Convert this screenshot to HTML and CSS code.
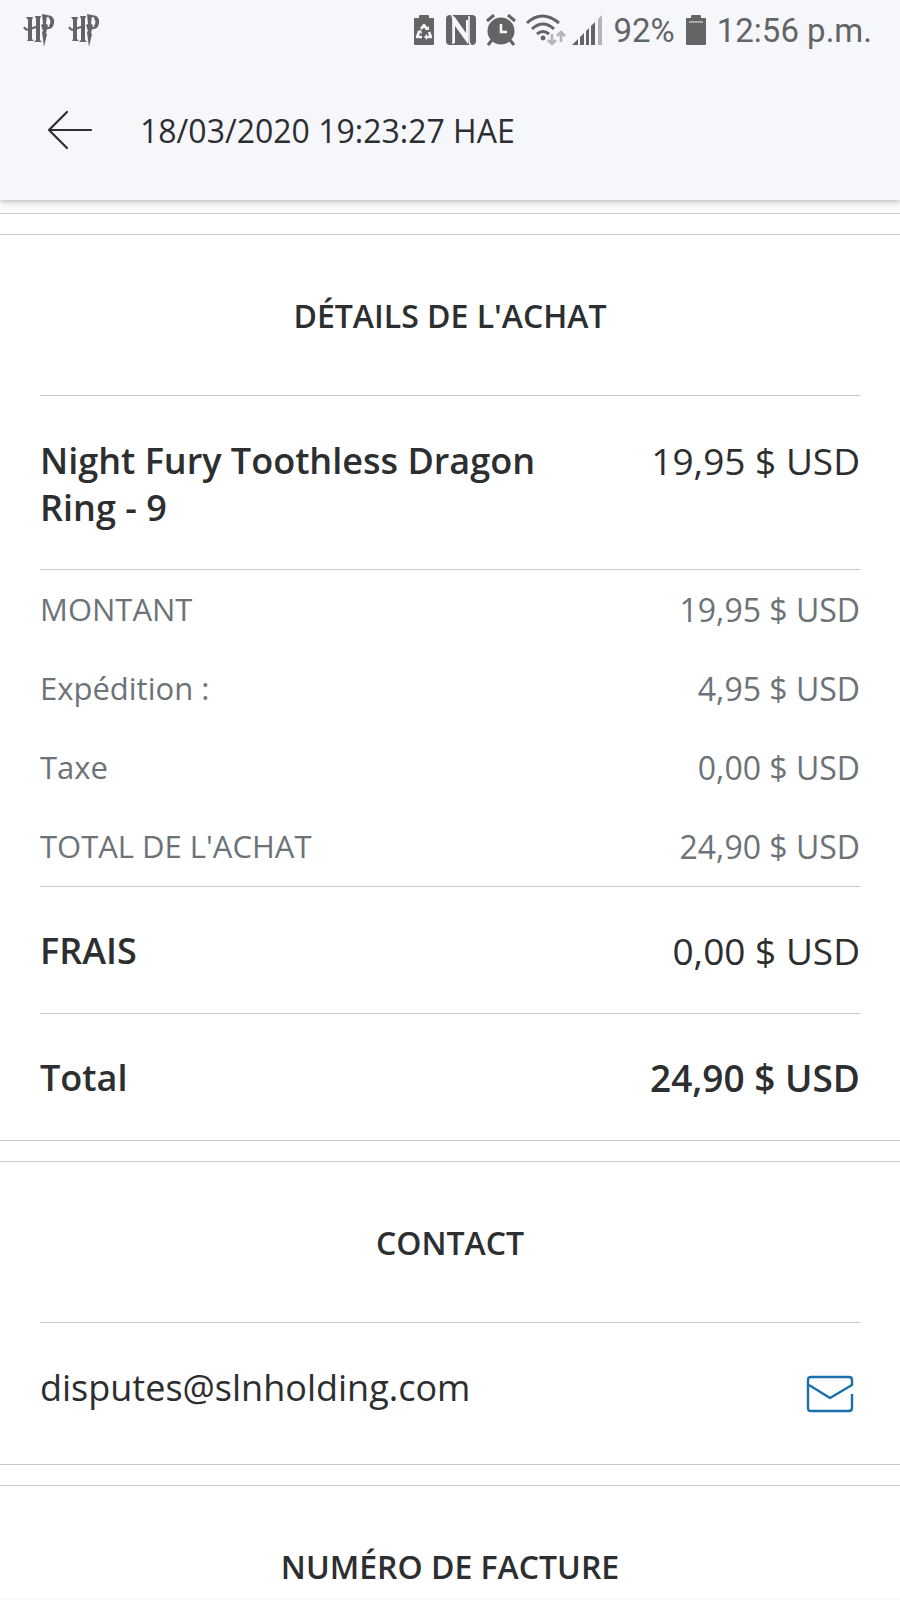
FILE: index.html
```html
<!DOCTYPE html>
<html lang="fr">
<head>
    <meta charset="UTF-8">
    <meta name="viewport" content="width=device-width, initial-scale=1.0">
    <title>Détails de l'achat</title>
    <link rel="stylesheet" href="styles.css">
</head>
<body>
    <header>
        <!-- Barre d'état -->
        <div class="status-bar">
            <svg class="monogram" viewBox="0 0 32 34" aria-hidden="true"><use href="#monogram"/></svg>
            <svg class="monogram" viewBox="0 0 32 34" aria-hidden="true"><use href="#monogram"/></svg>

            <div class="status-right">
                <svg class="icon-battery" viewBox="0 0 22 32" aria-hidden="true">
                    <path d="M2 4h4V2q0-1 1-1h8q1 0 1 1v2h4q1 0 1 1v25q0 1-1 1H2q-1 0-1-1V5q0-1 1-1z" fill="#636466"/>
                    <path d="M8 15l3-4 3 4M16 18l2 5h-5M9 23H4l2-5" fill="none" stroke="#f6f7fb" stroke-width="2.6" stroke-linejoin="round"/>
                    <path d="M12 16h4v-4zM14 20v6l-3-3zM4 17l4-1 1 4z" fill="#f6f7fb"/>
                </svg>
                <svg class="icon-nfc" viewBox="0 0 32 32" aria-hidden="true">
                    <rect x="1" y="1" width="30" height="30" rx="4" fill="#636466"/>
                    <path d="M6 1q2 1 2 4v25M26 31q-2-1-2-4V2" fill="none" stroke="#f6f7fb" stroke-width="1.6"/>
                    <path d="M8 4l13 18V6h2v24L10 12v17H8z" fill="#f6f7fb"/>
                    <path d="M8 3l14 20" stroke="#f6f7fb" stroke-width="3"/>
                </svg>
                <svg class="icon-alarm" viewBox="0 0 32 32" aria-hidden="true">
                    <circle cx="16" cy="17" r="13.5" fill="#636466"/>
                    <path d="M2 7l7-6M30 7l-7-6M7 26l-4 5M25 26l4 5" stroke="#636466" stroke-width="3"/>
                    <path d="M16 10v8h6" fill="none" stroke="#f6f7fb" stroke-width="2.6"/>
                </svg>
                <svg class="icon-wifi" viewBox="0 0 42 32" aria-hidden="true">
                    <path d="M2 9q15-14 32 0M7 15q11-10 22 0M12 20q6-5 12 0" fill="none" stroke="#636466" stroke-width="3"/>
                    <circle cx="18" cy="24" r="2.4" fill="#636466"/>
                    <path d="M27 20v10M23 26l4 4 4-4M36 28V18M32 22l4-4 4 4" fill="none" stroke="#b4b5b8" stroke-width="2.6"/>
                </svg>
                <svg class="icon-signal" viewBox="0 0 32 32" aria-hidden="true">
                    <path d="M1 31l6-6v6zM9 31v-8l4-4v12zM15 31V17l3-3v17zM20 31V12l4-4v23z" fill="#636466"/>
                    <path d="M27 31V5l4-4v30z" fill="#b4b5b8"/>
                </svg>
                <span>92%</span>
                <svg class="icon-battery" viewBox="0 0 22 32" aria-hidden="true">
                    <path d="M2 4h4V2q0-1 1-1h8q1 0 1 1v2h4q1 0 1 1v25q0 1-1 1H2q-1 0-1-1V5q0-1 1-1z" fill="#636466"/>
                    <path d="M4 8h14" stroke="#a9aaac" stroke-width="2"/>
                </svg>
                <span>12:56 p.m.</span>
            </div>
        </div>

        <div class="title-bar">
            <button type="button" class="back-btn" aria-label="Retour">
                <svg viewBox="0 0 48 40" aria-hidden="true">
                    <path d="M21 2L3 20l18 18M3 20h42" fill="none" stroke="#2c2e2f" stroke-width="2.2" stroke-linecap="round" stroke-linejoin="round"/>
                </svg>
            </button>
            <h1>18/03/2020 19:23:27 HAE</h1>
        </div>
    </header>

    <main>
        <!-- Détails de l'achat -->
        <section>
            <h2>DÉTAILS DE L'ACHAT</h2>
            <table>
                <tbody class="item">
                    <tr>
                        <th scope="row">Night Fury Toothless Dragon Ring - 9</th>
                        <td>19,95 $ USD</td>
                    </tr>
                </tbody>
                <tbody class="amounts">
                    <tr>
                        <th scope="row">MONTANT</th>
                        <td>19,95 $ USD</td>
                    </tr>
                    <tr>
                        <th scope="row">Expédition :</th>
                        <td>4,95 $ USD</td>
                    </tr>
                    <tr>
                        <th scope="row">Taxe</th>
                        <td>0,00 $ USD</td>
                    </tr>
                    <tr>
                        <th scope="row">TOTAL DE L'ACHAT</th>
                        <td>24,90 $ USD</td>
                    </tr>
                </tbody>
                <tbody class="totals">
                    <tr>
                        <th scope="row">FRAIS</th>
                        <td>0,00 $ USD</td>
                    </tr>
                    <tr class="grand-total">
                        <th scope="row">Total</th>
                        <td>24,90 $ USD</td>
                    </tr>
                </tbody>
            </table>
        </section>

        <!-- Contact -->
        <section>
            <h2>CONTACT</h2>
            <a class="contact" href="mailto:disputes@slnholding.com">
                <span>disputes@slnholding.com</span>
                <svg viewBox="0 0 48 38" aria-hidden="true">
                    <path d="M46 19v14q0 3-3 3H5q-3 0-3-3V5q0-3 3-3h38q3 0 3 3v5L24 23 3 10" fill="none" stroke="#1a70ab" stroke-width="2.4" stroke-linejoin="round"/>
                </svg>
            </a>
        </section>

        <!-- Facture -->
        <section class="invoice">
            <h2>NUMÉRO DE FACTURE</h2>
        </section>
    </main>

    <svg class="defs" aria-hidden="true">
        <symbol id="monogram" viewBox="0 0 32 34">
            <path d="M3 4h7L9 7v19l2 2H4l1-2V7zM12 3h6l-1 3v21l2 2h-8l2-2V6zM19 1l5 1-1 9 2 1-2 8 1 1-3 13-2-15 1-1-2-6 2-1z" fill="#636466"/>
            <path d="M1 14q2 4 6 2l9-3M23 3q8 0 7 7-1 6-7 5" fill="none" stroke="#636466" stroke-width="2"/>
            <path d="M27 4q4 5 0 10" fill="none" stroke="#636466" stroke-width="3"/>
        </symbol>
    </svg>
</body>
</html>
```
FILE: styles.css
```css
* {
    margin: 0;
    padding: 0;
    box-sizing: border-box;
}

body {
    font-family: "Open Sans", "Noto Sans", sans-serif;
    font-size: 36px;
    line-height: 47px;
    color: #2c2e2f;
    background-color: #fafafa;
}

.defs {
    position: absolute;
    width: 0;
    height: 0;
}

/* En-tête */
header {
    position: relative;
    background-color: #f6f7fb;
    box-shadow: 0 1px 6px rgba(0, 0, 0, 0.3);
}

.status-bar {
    display: flex;
    align-items: center;
    gap: 13px;
    height: 60px;
    padding: 0 28px 0 23px;
    font-family: Roboto, sans-serif;
    font-size: 33px;
    color: #636466;
}

.status-right {
    display: flex;
    align-items: center;
    gap: 10px;
    margin-left: auto;
}

.monogram {
    width: 32px;
    height: 34px;
}

.icon-battery {
    width: 22px;
    height: 32px;
}

.icon-nfc,
.icon-alarm,
.icon-signal {
    width: 32px;
    height: 32px;
}

.icon-nfc,
.icon-alarm {
    margin-right: -2px;
}

.icon-wifi {
    width: 42px;
    height: 32px;
    margin-right: -6px;
}

.title-bar {
    display: flex;
    align-items: center;
    gap: 46px;
    height: 140px;
    padding: 0 46px;
}

.back-btn {
    width: 48px;
    height: 40px;
    border: none;
    background: none;
    cursor: pointer;
}

.back-btn svg {
    display: block;
    width: 48px;
    height: 40px;
}

h1 {
    font-size: 32px;
    font-weight: 400;
}

/* Sections */
main {
    padding-top: 13px;
}

section {
    padding: 0 40px;
    background-color: #fff;
    border-bottom: 1px solid #c5c7c9;
}

section::before {
    content: "";
    display: block;
    height: 20px;
    margin: 0 -40px;
    border-top: 1px solid #c5c7c9;
    border-bottom: 1px solid #c5c7c9;
}

section + section::before {
    border-top: none;
}

h2 {
    padding: 57px 0 56px;
    font-size: 32px;
    font-weight: 600;
    text-align: center;
}

/* Montants */
table {
    width: 100%;
    border-collapse: collapse;
}

tbody {
    border-top: 1px solid #c5c7c9;
}

th {
    font-weight: 600;
    text-align: left;
}

td {
    font-size: 37px;
    text-align: right;
    vertical-align: top;
    white-space: nowrap;
}

.item th,
.item td {
    padding: 41px 0 38px;
}

.item th {
    padding-right: 80px;
}

.amounts th,
.amounts td {
    padding: 16px 0;
    font-size: 31px;
    font-weight: 400;
    color: #6c7378;
}

.amounts td {
    font-size: 32px;
}

.totals th,
.totals td {
    padding: 40px 0 39px;
}

.grand-total {
    border-top: 1px solid #c5c7c9;
}

.totals .grand-total td {
    font-weight: 600;
}

/* Contact */
.contact {
    display: flex;
    justify-content: space-between;
    align-items: center;
    height: 142px;
    padding-right: 6px;
    border-top: 1px solid #c5c7c9;
    color: inherit;
    text-decoration: none;
}

.contact span {
    padding-bottom: 12px;
}

.contact svg {
    width: 48px;
    height: 38px;
}

.invoice {
    border-bottom: none;
}

.invoice h2 {
    padding-bottom: 8px;
}
```
